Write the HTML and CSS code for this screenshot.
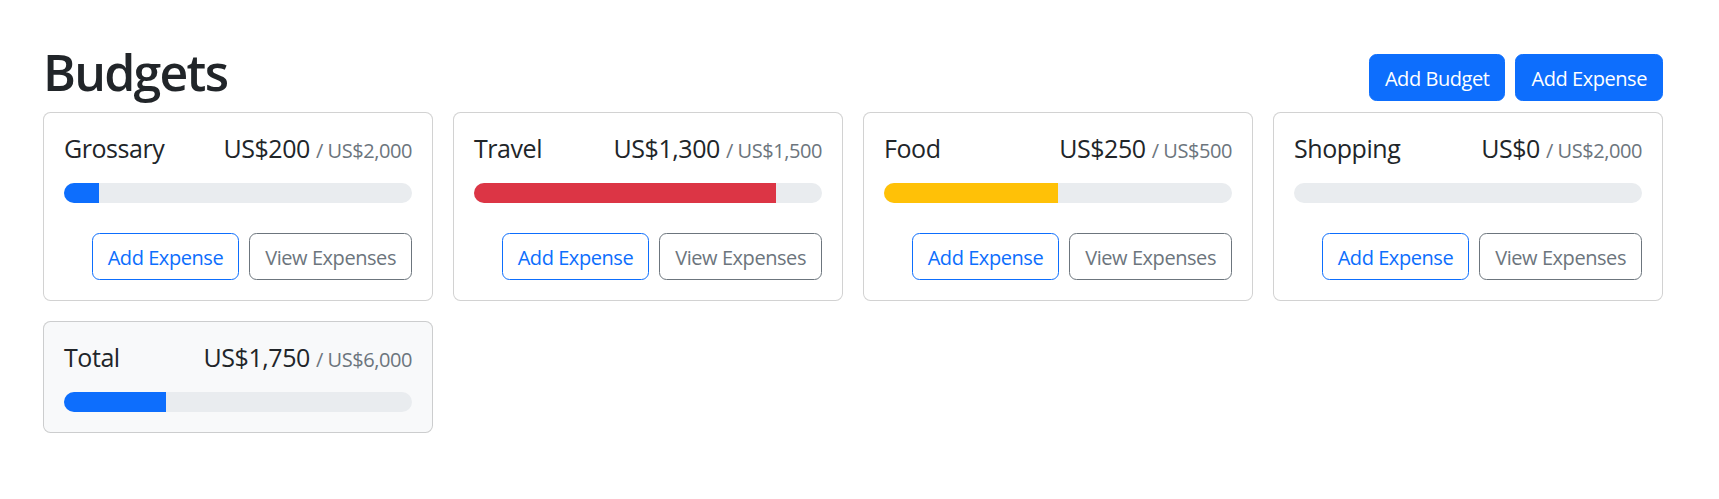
FILE: index.html
```html
<!DOCTYPE html>
<html lang="en">
<head>
<meta charset="utf-8">
<title>Budgets</title>
<link rel="stylesheet" href="styles.css">
</head>
<body>
<main class="page">
  <header class="page-header">
    <h1 class="page-title">Budgets</h1>
    <div class="header-actions">
      <button class="btn btn-primary">Add Budget</button>
      <button class="btn btn-primary">Add Expense</button>
    </div>
  </header>
  <section class="budget-grid">
    <article class="card">
      <div class="card-title-row">
        <div class="card-name">Grossary</div>
        <div class="card-amount">US$200 <span class="card-max">/ US$2,000</span></div>
      </div>
      <div class="progress"><div class="progress-bar bar-primary" style="width:10%"></div></div>
      <div class="card-actions">
        <button class="btn btn-outline-primary">Add Expense</button>
        <button class="btn btn-outline-secondary">View Expenses</button>
      </div>
    </article>
    <article class="card">
      <div class="card-title-row">
        <div class="card-name">Travel</div>
        <div class="card-amount">US$1,300 <span class="card-max">/ US$1,500</span></div>
      </div>
      <div class="progress"><div class="progress-bar bar-danger" style="width:86.67%"></div></div>
      <div class="card-actions">
        <button class="btn btn-outline-primary">Add Expense</button>
        <button class="btn btn-outline-secondary">View Expenses</button>
      </div>
    </article>
    <article class="card">
      <div class="card-title-row">
        <div class="card-name">Food</div>
        <div class="card-amount">US$250 <span class="card-max">/ US$500</span></div>
      </div>
      <div class="progress"><div class="progress-bar bar-warning" style="width:50%"></div></div>
      <div class="card-actions">
        <button class="btn btn-outline-primary">Add Expense</button>
        <button class="btn btn-outline-secondary">View Expenses</button>
      </div>
    </article>
    <article class="card">
      <div class="card-title-row">
        <div class="card-name">Shopping</div>
        <div class="card-amount">US$0 <span class="card-max">/ US$2,000</span></div>
      </div>
      <div class="progress"><div class="progress-bar bar-primary" style="width:0%"></div></div>
      <div class="card-actions">
        <button class="btn btn-outline-primary">Add Expense</button>
        <button class="btn btn-outline-secondary">View Expenses</button>
      </div>
    </article>
    <article class="card card-light">
      <div class="card-title-row">
        <div class="card-name">Total</div>
        <div class="card-amount">US$1,750 <span class="card-max">/ US$6,000</span></div>
      </div>
      <div class="progress"><div class="progress-bar bar-primary" style="width:29.17%"></div></div>
    </article>
  </section>
</main>
</body>
</html>
```
FILE: styles.css
```css
* { box-sizing: border-box; }

body {
  margin: 0;
  background: #fff;
  color: #212529;
  font-family: "Open Sans", "Noto Sans", sans-serif;
  font-size: 20px;
  line-height: 1.5;
  letter-spacing: -0.022em;
}

.page {
  width: 1620px;
  margin-left: 43px;
  padding-top: 42px;
}

.page-header {
  display: flex;
  justify-content: space-between;
  align-items: center;
}

.page-title {
  margin: 0 0 10px;
  font-size: 50px;
  font-weight: 600;
  line-height: 1.2;
  letter-spacing: -0.035em;
}

.header-actions {
  display: flex;
  gap: 10px;
}

.btn {
  font-family: inherit;
  font-size: 20px;
  letter-spacing: -0.022em;
  line-height: 30px;
  padding: 9px 15px 6px;
  border: 1px solid transparent;
  border-radius: 7.5px;
  background: transparent;
  cursor: pointer;
}

.btn-primary {
  background: #0d6efd;
  border-color: #0d6efd;
  color: #fff;
}

.btn-outline-primary {
  color: #0d6efd;
  border-color: #0d6efd;
}

.btn-outline-secondary {
  color: #6c757d;
  border-color: #6c757d;
}

.budget-grid {
  display: grid;
  grid-template-columns: repeat(4, 1fr);
  gap: 20px;
  align-items: start;
}

.card {
  border: 1px solid rgba(0, 0, 0, 0.175);
  border-radius: 7.5px;
  padding: 20px;
  background: #fff;
}

.card-light {
  background: #f8f9fa;
}

.card-title-row {
  display: flex;
  justify-content: space-between;
  align-items: baseline;
  margin-bottom: 20px;
  font-size: 25px;
  line-height: 1.2;
}

.card-max {
  font-size: 20px;
  color: #6c757d;
}

.progress {
  height: 20px;
  border-radius: 10px;
  background: #e9ecef;
  overflow: hidden;
  display: flex;
}

.progress-bar { height: 100%; }
.bar-primary { background: #0d6efd; }
.bar-danger { background: #dc3545; }
.bar-warning { background: #ffc107; }

.card-actions {
  display: flex;
  justify-content: flex-end;
  gap: 10px;
  margin-top: 30px;
}
```
